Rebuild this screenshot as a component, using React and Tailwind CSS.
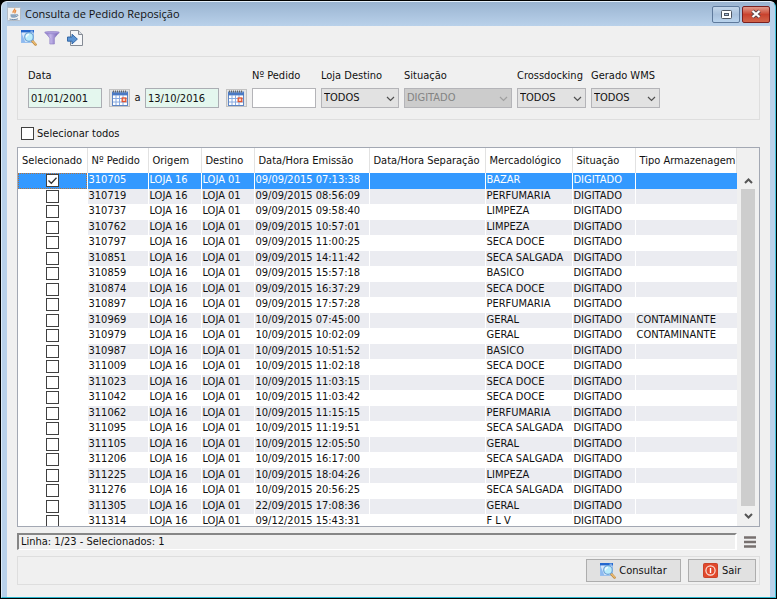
import React, { useState } from 'react'

const COLUMNS = [
    { label: 'Selecionado', width: 'w-[69px]' },
    { label: 'Nº Pedido', width: 'w-[61px]' },
    { label: 'Origem', width: 'w-[53px]' },
    { label: 'Destino', width: 'w-[53px]' },
    { label: 'Data/Hora Emissão', width: 'w-[115px]' },
    { label: 'Data/Hora Separação', width: 'w-[116px]' },
    { label: 'Mercadológico', width: 'w-[87px]' },
    { label: 'Situação', width: 'w-[63px]' },
    { label: 'Tipo Armazenagem', width: 'w-auto' },
]

const ORDERS = [
    ['310705', '09/09/2015 07:13:38', 'BAZAR'],
    ['310719', '09/09/2015 08:56:09', 'PERFUMARIA'],
    ['310737', '09/09/2015 09:58:40', 'LIMPEZA'],
    ['310762', '09/09/2015 10:57:01', 'LIMPEZA'],
    ['310797', '09/09/2015 11:00:25', 'SECA DOCE'],
    ['310851', '09/09/2015 14:11:42', 'SECA SALGADA'],
    ['310859', '09/09/2015 15:57:18', 'BASICO'],
    ['310874', '09/09/2015 16:37:29', 'SECA DOCE'],
    ['310897', '09/09/2015 17:57:28', 'PERFUMARIA'],
    ['310969', '10/09/2015 07:45:00', 'GERAL', 'CONTAMINANTE'],
    ['310979', '10/09/2015 10:02:09', 'GERAL', 'CONTAMINANTE'],
    ['310987', '10/09/2015 10:51:52', 'BASICO'],
    ['311009', '10/09/2015 11:02:18', 'SECA DOCE'],
    ['311023', '10/09/2015 11:03:15', 'SECA DOCE'],
    ['311042', '10/09/2015 11:03:42', 'SECA DOCE'],
    ['311062', '10/09/2015 11:15:15', 'PERFUMARIA'],
    ['311095', '10/09/2015 11:19:51', 'SECA SALGADA'],
    ['311105', '10/09/2015 12:05:50', 'GERAL'],
    ['311206', '10/09/2015 16:17:00', 'SECA SALGADA'],
    ['311225', '10/09/2015 18:04:26', 'LIMPEZA'],
    ['311276', '10/09/2015 20:56:25', 'SECA SALGADA'],
    ['311305', '22/09/2015 17:08:36', 'GERAL'],
    ['311314', '09/12/2015 15:43:31', 'F L V'],
]

const JavaIcon = () => (
    <svg width="14" height="14" viewBox="0 0 14 14">
        <rect x="0.5" y="0.5" width="13" height="13" rx="1" fill="#f1f2f3" stroke="#b4bcc6" />
        <path d="M7.6 1.5c1 1.5-2.6 2.4-1.4 4.4M9.2 3.4C7.4 4.4 7.6 5.2 8.2 6.4" fill="none" stroke="#e8873a" strokeWidth="1.3" />
        <path d="M3.5 7.2h6v1.6a2 2 0 0 1-2 2H5.5a2 2 0 0 1-2-2z" fill="#8aa4c0" />
        <path d="M9.5 7.6c2-.4 1.8 1.8-.4 2M2.5 12c2.6.8 6 .8 8.5-.2" fill="none" stroke="#6f8cad" />
    </svg>
)

const SearchIcon = () => (
    <svg width="16" height="16" viewBox="0 0 16 16">
        <rect x="0.5" y="0.5" width="12" height="12" fill="#d8e8fa" stroke="#9cc2ee" />
        <rect x="0" y="0" width="13" height="2.4" fill="#2468cf" />
        <path d="M9.5 1.2h2.4" stroke="#a9cbf5" />
        <path d="M0.5 3v9.5h4z" fill="#8dbaf0" />
        <path d="M11 10.6l3.6 4" stroke="#c08a3c" strokeWidth="2.4" strokeLinecap="round" />
        <path d="M11.4 10.8l3 3.4" stroke="#f0c27a" strokeWidth="1.2" strokeLinecap="round" />
        <circle cx="8" cy="7" r="4.3" fill="#b9ecfb" stroke="#6ea3d6" strokeWidth="1.2" />
        <path d="M5.4 7.4A2.7 2.7 0 0 1 8 4.4" fill="none" stroke="#f2fdff" strokeWidth="1.5" />
    </svg>
)

const FilterIcon = () => (
    <svg width="16" height="14" viewBox="0 0 16 14">
        <defs>
            <linearGradient id="funnel" x1="0" x2="1">
                <stop offset="0" stopColor="#8673c4" />
                <stop offset="0.4" stopColor="#c3b6ea" />
                <stop offset="1" stopColor="#6c58ae" />
            </linearGradient>
        </defs>
        <path d="M0.8 1.2h14.4L10.4 7v6H5.8V7z" fill="url(#funnel)" stroke="#8b7bc2" strokeWidth="0.6" />
        <ellipse cx="8" cy="1.6" rx="7.2" ry="1.2" fill="#ab9cdc" stroke="#8b7bc2" strokeWidth="0.5" />
    </svg>
)

const ImportIcon = () => (
    <svg width="16" height="16" viewBox="0 0 16 16">
        <path d="M3.5 0.5h8l4 4v11h-12z" fill="#f6f7f9" stroke="#848a94" />
        <path d="M11.5 0.5v4h4" fill="#d9dde3" stroke="#848a94" />
        <path d="M0.5 7h4.5V4.2l5.4 4.9L5 14v-2.8H0.5z" fill="#5b95d4" stroke="#2a5f9f" strokeWidth="0.9" />
    </svg>
)

const CalendarIcon = () => (
    <svg width="16" height="16" viewBox="0 0 16 16">
        <rect x="0.5" y="2" width="15" height="13.5" fill="#fff" stroke="#5f86c4" />
        <rect x="0" y="2.4" width="16" height="3" fill="#4a79c4" />
        <path d="M1 1.5h14" stroke="#666" strokeWidth="2" strokeDasharray="1 1" />
        <path d="M1 8.5h14M1 12h14M4 5v10M7.5 5v10M11 5v10" stroke="#88aae0" />
        <rect x="10.2" y="8" width="3.6" height="3.6" fill="#fbd0c0" stroke="#e2532e" strokeWidth="1.3" />
    </svg>
)

const PowerIcon = () => (
    <svg width="15" height="15" viewBox="0 0 15 15">
        <rect x="0.5" y="0.5" width="14" height="14" rx="1" fill="#e2492c" stroke="#c9432a" />
        <circle cx="7.5" cy="7.5" r="4.6" fill="none" stroke="#fbe3dc" strokeWidth="1.2" />
        <path d="M7.5 5v5" stroke="#fff" strokeWidth="1.4" />
    </svg>
)

const Chevron = ({ up, bold }) => (
    <svg width="9" height="6" viewBox="0 0 9 6">
        <path
            d={up ? 'M1 5l3.5-3.5L8 5' : 'M1 1l3.5 3.5L8 1'}
            fill="none"
            stroke="currentColor"
            strokeWidth={bold ? 2 : 1.2}
        />
    </svg>
)

const DateField = ({ id, label, value }) => (
    <div className="flex items-center gap-[7px]">
        <input
            id={id}
            aria-label={label}
            defaultValue={value}
            className="h-5 w-[74px] border border-[#abadb3] bg-[#e4f7ee] px-0.5 outline-none"
        />
        <button
            type="button"
            aria-label="Abrir calendário"
            className="flex h-[18px] w-[21px] items-center justify-center border border-[#c2c2c2] bg-[#e4e4e4]"
        >
            <CalendarIcon />
        </button>
    </div>
)

const SelectField = ({ id, label, value, width, disabled }) => (
    <div className={`flex flex-col gap-1 ${width}`}>
        <label htmlFor={id} className="h-4 whitespace-nowrap">{label}</label>
        <div className="relative">
            <select
                id={id}
                disabled={disabled}
                className="h-5 w-full appearance-none border border-[#b4b4b8] bg-[#e2e2e2] px-0.5 outline-none disabled:bg-[#cccccc] disabled:text-[#838383] disabled:opacity-100"
            >
                <option>{value}</option>
            </select>
            <span className={`pointer-events-none absolute top-2 right-1 ${disabled ? 'text-[#a0a0a0]' : 'text-[#505050]'}`}>
                <Chevron />
            </span>
        </div>
    </div>
)

const CheckBox = ({ id, label, checked, onChange }) => (
    <span className="relative block h-[13px] w-[13px] shrink-0">
        <input
            id={id}
            type="checkbox"
            aria-label={label}
            checked={checked}
            onChange={onChange}
            className="block h-[13px] w-[13px] appearance-none border border-[#404040] bg-white"
        />
        {checked && (
            <svg className="pointer-events-none absolute inset-0" width="13" height="13" viewBox="0 0 13 13">
                <path d="M2.5 6.5l2.8 2.8 5.2-5.6" fill="none" stroke="#333" strokeWidth="1.3" />
            </svg>
        )}
    </span>
)

const App = () => {
    const [selected, setSelected] = useState(['310705'])

    const toggle = (id) => {
        setSelected(selected.includes(id) ? selected.filter((s) => s !== id) : [...selected, id])
    }

    const toggleAll = () => {
        setSelected(selected.length === ORDERS.length ? [] : ORDERS.map(([id]) => id))
    }

    return (
        <div className="h-screen bg-black p-px font-['DejaVu_Sans_Condensed','DejaVu_Sans',sans-serif] text-[11px] leading-4 text-[#111]">
            <div className="flex h-full flex-col rounded-t-md border border-t-[#e4f0fb] border-r-[#45c4dc] border-b-[#28b4cc] border-l-[#dcebf8] bg-[#b9d1ea] px-[5px]">
                <header className="flex h-6 shrink-0 items-center bg-linear-to-b from-[#9ab4d1] to-[#b9d1ea] font-['Open_Sans',sans-serif]">
                    <JavaIcon />
                    <h1 className="ml-1 flex-1">Consulta de Pedido Reposição</h1>
                    <div className="flex gap-0.5">
                        <button
                            type="button"
                            aria-label="Maximizar"
                            className="flex h-[17px] w-7 items-center justify-center rounded-xs border border-[#5f7a9c] bg-linear-to-b from-[#c3d6ea] via-[#a9c1dc] to-[#b9d3ed]"
                        >
                            <svg width="11" height="9" viewBox="0 0 11 9">
                                <rect x="0.5" y="0.5" width="10" height="8" rx="1" fill="#fff" stroke="#4d5663" />
                                <rect x="3.5" y="3.5" width="4" height="2" fill="#a9c1dc" stroke="#4d5663" />
                            </svg>
                        </button>
                        <button
                            type="button"
                            aria-label="Fechar"
                            className="flex h-[17px] w-7 items-center justify-center rounded-xs border border-[#7a2020] bg-linear-to-b from-[#e09a8c] via-[#c9422e] to-[#d2644a]"
                        >
                            <svg width="12" height="10" viewBox="0 0 12 10">
                                <path d="M2.5 2l7 6M9.5 2l-7 6" stroke="#5c4448" strokeWidth="4" />
                                <path d="M2.5 2l7 6M9.5 2l-7 6" stroke="#fff" strokeWidth="2.2" />
                            </svg>
                        </button>
                    </div>
                </header>

                <main className="flex min-h-0 flex-1 flex-col bg-[#f0f0f0] px-2.5 pb-3">
                    <div className="flex h-[30px] shrink-0 items-center gap-[7px] px-1 pb-1.5">
                        <button type="button" aria-label="Consultar pedidos"><SearchIcon /></button>
                        <button type="button" aria-label="Filtrar"><FilterIcon /></button>
                        <button type="button" aria-label="Importar"><ImportIcon /></button>
                    </div>

                    <section className="flex h-16 shrink-0 gap-[5px] border border-[#dedede] px-2.5 pt-[11px]">
                        <div className="flex w-[219px] flex-col gap-1">
                            <label htmlFor="data-inicio" className="h-4">Data</label>
                            <div className="flex items-center justify-between">
                                <DateField id="data-inicio" label="Data inicial" value="01/01/2001" />
                                <span>a</span>
                                <DateField id="data-fim" label="Data final" value="13/10/2016" />
                            </div>
                        </div>
                        <div className="flex w-16 flex-col gap-1">
                            <label htmlFor="pedido" className="h-4 whitespace-nowrap">Nº Pedido</label>
                            <input id="pedido" className="h-5 w-full border border-[#b4b4b8] bg-white px-0.5 outline-none" />
                        </div>
                        <SelectField id="loja" label="Loja Destino" value="TODOS" width="w-[78px]" />
                        <SelectField id="situacao" label="Situação" value="DIGITADO" width="w-[108px]" disabled />
                        <SelectField id="crossdocking" label="Crossdocking" value="TODOS" width="w-[69px]" />
                        <SelectField id="wms" label="Gerado WMS" value="TODOS" width="w-[69px]" />
                    </section>

                    <div className="flex h-[27px] shrink-0 items-center gap-[3px] px-1">
                        <CheckBox id="todos" checked={selected.length === ORDERS.length} onChange={toggleAll} />
                        <label htmlFor="todos">Selecionar todos</label>
                    </div>

                    <div className="flex min-h-0 flex-1 border border-[#a3a8b3] bg-[#f0f0f0]">
                        <div className="min-w-0 flex-1 overflow-hidden bg-white">
                            <table className="w-full table-fixed border-collapse">
                                <thead>
                                    <tr className="h-[25px]">
                                        {COLUMNS.map((col) => (
                                            <th
                                                key={col.label}
                                                className={`border-r border-[#e2e2e2] p-0 pl-1 text-left font-normal whitespace-nowrap ${col.width}`}
                                            >
                                                {col.label}
                                            </th>
                                        ))}
                                    </tr>
                                </thead>
                                <tbody>
                                    {ORDERS.map(([id, issued, group, storage], idx) => {
                                        const active = idx === 0
                                        const cells = [id, 'LOJA 16', 'LOJA 01', issued, '', group, 'DIGITADO', storage]
                                        const tone = active
                                            ? 'bg-[#3399ff] text-white'
                                            : 'group-even:bg-[#ebecf1]'
                                        return (
                                            <tr key={id} className="group align-top odd:h-4 even:h-[15px]">
                                                <td
                                                    className={`overflow-hidden p-0 ${active ? 'bg-[#3399ff] outline-1 -outline-offset-1 outline-dotted outline-[#b5733a]' : ''}`}
                                                >
                                                    <div className="flex h-[15px] items-center justify-center">
                                                        <CheckBox
                                                            label={`Selecionar ${id}`}
                                                            checked={selected.includes(id)}
                                                            onChange={() => toggle(id)}
                                                        />
                                                    </div>
                                                </td>
                                                {cells.map((cell, i) => (
                                                    <td
                                                        key={i}
                                                        className={`border-l border-white p-0 pl-px leading-[13px] whitespace-nowrap ${tone}`}
                                                    >
                                                        {cell}
                                                    </td>
                                                ))}
                                            </tr>
                                        )
                                    })}
                                </tbody>
                            </table>
                        </div>
                        <div className="flex w-[22px] shrink-0 flex-col items-center pt-[25px] text-[#555]">
                            <button type="button" aria-label="Rolar para cima" className="flex h-4 items-center">
                                <Chevron up bold />
                            </button>
                            <div className="w-3.5 flex-1 bg-[#cdcdcd]" />
                            <button type="button" aria-label="Rolar para baixo" className="flex h-5 items-center">
                                <Chevron bold />
                            </button>
                        </div>
                    </div>

                    <div className="mt-1.5 flex h-[17px] shrink-0 items-center gap-[7px] pr-1">
                        <div className="h-full flex-1 border-t-2 border-r-2 border-b border-l-2 border-t-[#868686] border-r-white border-b-white border-l-[#868686] pl-0.5 leading-[14px]">
                            Linha: 1/{ORDERS.length} - Selecionados: {selected.length}
                        </div>
                        <button type="button" aria-label="Opções">
                            <svg width="12" height="12" viewBox="0 0 12 12">
                                <path d="M0 1.5h12M0 6h12M0 10.5h12" stroke="#77706f" strokeWidth="2.6" />
                            </svg>
                        </button>
                    </div>

                    <footer className="mt-1.5 flex h-[29px] shrink-0 items-center justify-end gap-[7px] border border-[#dedede] px-[3px]">
                        <button
                            type="button"
                            className="flex h-[23px] w-[95px] items-center justify-center gap-[3px] border border-[#adadad] bg-[#e1e1e1]"
                        >
                            <SearchIcon />
                            Consultar
                        </button>
                        <button
                            type="button"
                            className="flex h-[23px] w-[68px] items-center justify-center gap-1 border border-[#adadad] bg-[#e1e1e1]"
                        >
                            <PowerIcon />
                            Sair
                        </button>
                    </footer>
                </main>
            </div>
        </div>
    )
}

export default App
